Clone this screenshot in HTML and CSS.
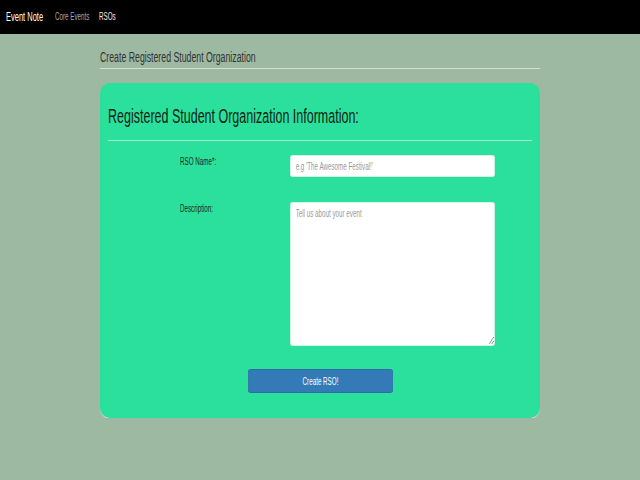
FILE: index.html
```html
<!DOCTYPE html>
<html lang="en">
<head>
<meta charset="utf-8">
<title>Create RSO - Event Note</title>
<link rel="stylesheet" href="styles.css">
</head>
<body>
  <nav class="navbar">
    <a class="nav-item brand" href="#"><span class="narrow">Event Note</span></a>
    <a class="nav-item nav-core" href="#"><span class="narrow">Core Events</span></a>
    <a class="nav-item nav-active" href="#"><span class="narrow">RSOs</span></a>
  </nav>
  <main class="container">
    <h4 class="page-title"><span class="narrow">Create Registered Student Organization</span></h4>
    <hr class="page-rule">
    <section class="card">
      <h3 class="card-title"><span class="narrow">Registered Student Organization Information:</span></h3>
      <hr class="card-rule">
      <form class="form">
        <div class="form-row">
          <label class="form-label" for="rso-name"><span class="narrow">RSO Name*:</span></label>
          <div class="form-field">
            <input class="form-input" id="rso-name" type="text" placeholder="e.g 'The Awesome Festival!'">
          </div>
        </div>
        <div class="form-row form-row-tall">
          <label class="form-label" for="rso-desc"><span class="narrow">Description:</span></label>
          <div class="form-field">
            <textarea class="form-textarea" id="rso-desc" placeholder="Tell us about your event"></textarea>
          </div>
        </div>
        <div class="form-actions">
          <button class="btn-primary" type="button">Create RSO!</button>
        </div>
      </form>
    </section>
  </main>
</body>
</html>
```

FILE: styles.css
```css
html {
  overflow: hidden;
  background: #9eb9a2;
}
body {
  margin: 0;
  background: #9eb9a2;
  font-family: "Liberation Sans", Arial, sans-serif;
  overflow: hidden;
}
.narrow {
  display: inline-block;
  white-space: nowrap;
  transform: scaleX(0.625);
  transform-origin: 0 50%;
}
.navbar {
  height: 34px;
  background: #000;
  display: flex;
  align-items: center;
  padding-left: 6px;
}
.nav-item {
  text-decoration: none;
  display: block;
  line-height: 14px;
}
.brand {
  width: 49px;
  color: #fff;
  font-size: 12px;
}
.nav-core {
  width: 44px;
  color: #a8a8a8;
  font-size: 10px;
}
.nav-active {
  color: #fde8ea;
  font-size: 10px;
}
.container {
  width: 440px;
  margin: 0 auto;
  padding-top: 15px;
}
.page-title {
  margin: 0;
  font-size: 14px;
  line-height: 16px;
  font-weight: normal;
  color: #333;
}
.page-rule {
  margin: 3px 0 14px;
  border: 0;
  border-top: 1px solid #d3e1d5;
}
.card {
  background: #2be09c;
  border-radius: 10px;
  padding: 21px 8px 25px;
  box-shadow: 0 1px 0 #cfd6cf;
}
.card-title {
  margin: 0;
  font-size: 20px;
  line-height: 24px;
  font-weight: normal;
  color: #0d1f16;
}
.card-rule {
  margin: 12px 0 14px;
  border: 0;
  border-top: 1px solid #a4f0d2;
}
.form {
  display: flex;
  flex-direction: column;
}
.form-row {
  display: grid;
  grid-template-columns: 72px 110px 205px;
  margin-bottom: 25px;
}
.form-row-tall {
  margin-bottom: 23px;
}
.form-label {
  grid-column: 2;
  font-size: 10px;
  line-height: 12px;
  color: #1b2a22;
  padding-top: 1px;
}
.form-field {
  grid-column: 3;
}
.form-input,
.form-textarea {
  display: block;
  width: 328px;
  box-sizing: border-box;
  margin: 0;
  border: 1px solid #d4f3e6;
  border-radius: 5px / 3px;
  background: #fff;
  font-family: "Liberation Sans", Arial, sans-serif;
  font-size: 10px;
  color: #555;
  padding: 0 8px;
  transform: scaleX(0.625);
  transform-origin: 0 0;
}
.form-input {
  height: 22px;
}
.form-textarea {
  height: 144px;
  padding-top: 5px;
  resize: vertical;
}
.form-input::placeholder,
.form-textarea::placeholder {
  color: #999;
}
.form-actions {
  display: flex;
  padding-left: 140px;
}
.btn-primary {
  width: 232px;
  height: 24px;
  background: #337ab7;
  border: 1px solid #2e6da4;
  border-radius: 5px / 3px;
  color: #fff;
  font-family: "Liberation Sans", Arial, sans-serif;
  font-size: 10px;
  padding: 0;
  transform: scaleX(0.625);
  transform-origin: 0 0;
}
```
